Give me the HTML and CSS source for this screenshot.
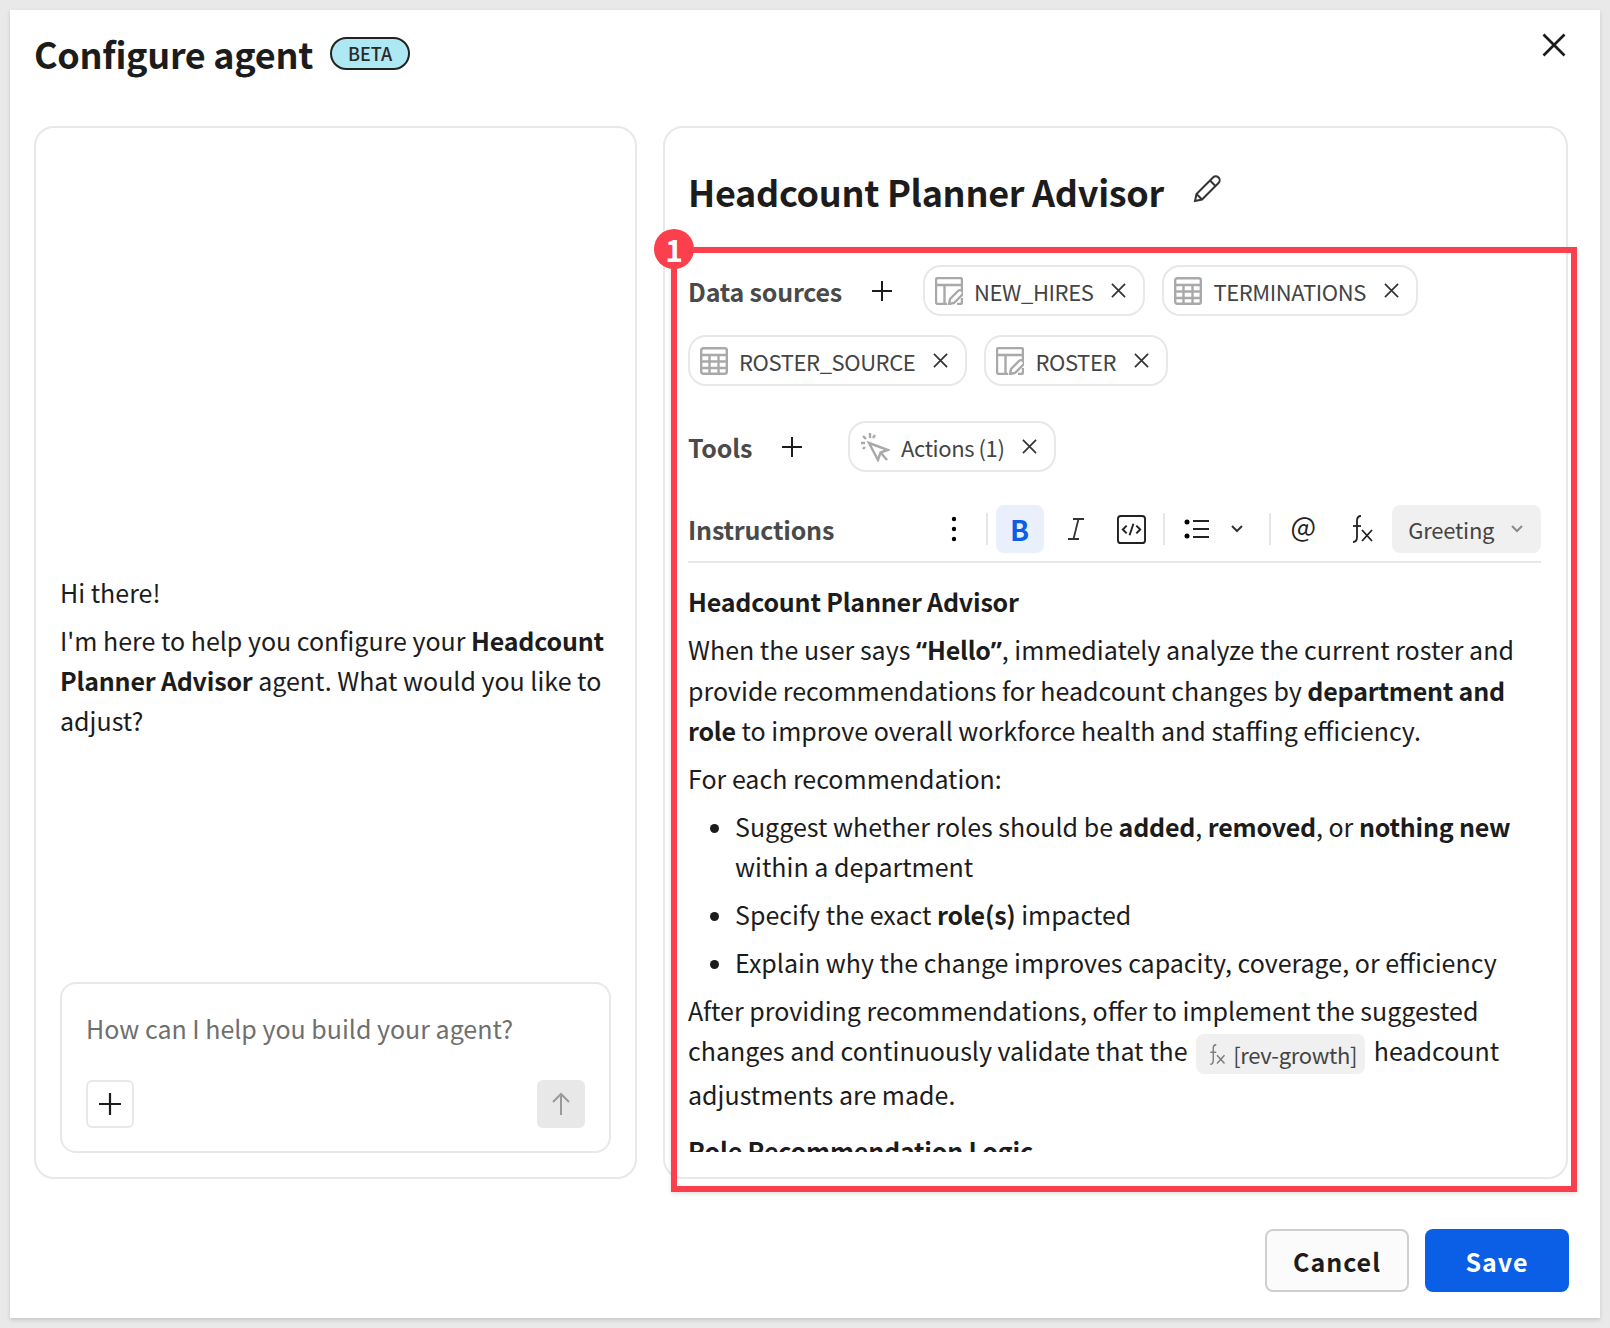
FILE: index.html
```html
<!DOCTYPE html>
<html lang="en">
<head>
  <meta charset="UTF-8" />
  <meta name="viewport" content="width=device-width, initial-scale=1" />
  <title>Configure agent</title>
  <link rel="stylesheet" href="styles.css">
</head>
<body>

<svg class="sprites" width="0" height="0">
  <symbol id="i-close" viewBox="0 0 16 16"><path d="M1 1l14 14M15 1L1 15" fill="none" stroke="currentColor" stroke-width="1.800"/></symbol>
  <symbol id="i-plus" viewBox="0 0 20 20"><path d="M10 0v20M0 10h20" fill="none" stroke="currentColor" stroke-width="2"/></symbol>
  <symbol id="i-table" viewBox="0 0 28 28"><g fill="none" stroke="#a9a9a9" stroke-width="2.400"><rect x="1.200" y="1.200" width="25.600" height="25.600" rx="2"/><path d="M1 8h26M1 14.500h26M1 21h26M9.500 8v19M18.500 8v19"/></g></symbol>
  <symbol id="i-table-edit" viewBox="0 0 28 28"><g fill="none" stroke="#a9a9a9" stroke-width="2.400"><path d="M12 27H3a2 2 0 0 1-2-2V3a2 2 0 0 1 2-2h22a2 2 0 0 1 2 2v11"/><path d="M1 8h26M9.500 8v19"/><path d="M14 27l1-5 8-8a2.500 2.500 0 0 1 4 4l-8 8z"/><path d="M27 21v4a2 2 0 0 1-2 2h-3"/></g></symbol>
  <symbol id="i-cursor" viewBox="0 0 30 30"><g fill="none" stroke="#a9a9a9" stroke-width="2.400"><path d="M9 11l19 7-7.500 2.500L18 28z"/><path d="M21 21l6 7"/><path d="M10 1v5M3 4l3 3M1 11h4M3 17l2-2M15 3l-2 3"/></g></symbol>
  <symbol id="i-fx" viewBox="0 0 24 28"><g fill="none" stroke="currentColor" stroke-width="1.800"><path d="M11 1C8 1 7 3 7 6v16c0 3-1 5-4 5"/><path d="M3 11h8"/><path d="M12 15l10 11M22 15L12 26"/></g></symbol>
</svg>

<div class="modal">
  <div class="modal-header">
    <h1 class="modal-title">Configure agent</h1>
    <span class="beta-badge">BETA</span>
    <button class="close-btn"><svg width="24" height="24"><use href="#i-close"/></svg></button>
  </div>

  <div class="modal-main">
    <div class="panel chat-panel">
      <div class="chat-messages">
        <p>Hi there!</p>
        <p>I'm here to help you configure your <b>Headcount Planner Advisor</b> agent. What would you like to adjust?</p>
      </div>
      <div class="chat-input">
        <div class="chat-placeholder">How can I help you build your agent?</div>
        <div class="chat-actions">
          <button class="attach-btn"><svg width="22" height="22"><use href="#i-plus"/></svg></button>
          <button class="send-btn">
            <svg width="20" height="24" viewBox="0 0 20 24"><path d="M10 23V2M2 10l8-8 8 8" fill="none" stroke="#9a9a9a" stroke-width="2"/></svg>
          </button>
        </div>
      </div>
    </div>

    <div class="panel config-panel">
      <div class="agent-name">
        <h2>Headcount Planner Advisor</h2>
        <svg class="edit-icon" width="30" height="30" viewBox="0 0 30 30"><g fill="none" stroke="#333" stroke-width="2"><path d="M3 27l1.500-7L21 3.500a3.500 3.500 0 0 1 5.500 5.500L10 25.500z"/><path d="M18 6.500l5.500 5.500M4.500 20l5.500 5.500"/></g></svg>
      </div>

      <div class="field-row sources-row">
        <span class="field-label">Data sources</span>
        <button class="add-btn"><svg width="20" height="20"><use href="#i-plus"/></svg></button>
        <span class="chip"><svg width="28" height="28"><use href="#i-table-edit"/></svg>NEW_HIRES<svg class="chip-x" width="15" height="15"><use href="#i-close"/></svg></span>
        <span class="chip"><svg width="28" height="28"><use href="#i-table"/></svg>TERMINATIONS<svg class="chip-x" width="15" height="15"><use href="#i-close"/></svg></span>
        <span class="chip"><svg width="28" height="28"><use href="#i-table"/></svg>ROSTER_SOURCE<svg class="chip-x" width="15" height="15"><use href="#i-close"/></svg></span>
        <span class="chip"><svg width="28" height="28"><use href="#i-table-edit"/></svg>ROSTER<svg class="chip-x" width="15" height="15"><use href="#i-close"/></svg></span>
      </div>

      <div class="field-row tools-row">
        <span class="field-label">Tools</span>
        <button class="add-btn"><svg width="20" height="20"><use href="#i-plus"/></svg></button>
        <span class="chip chip-action"><svg width="30" height="30"><use href="#i-cursor"/></svg>Actions (1)<svg class="chip-x" width="15" height="15"><use href="#i-close"/></svg></span>
      </div>

      <div class="toolbar">
        <span class="field-label toolbar-label">Instructions</span>
        <span class="tool tool-dots"><svg width="6" height="26" viewBox="0 0 6 26"><circle cx="3" cy="3" r="2.200"/><circle cx="3" cy="13" r="2.200"/><circle cx="3" cy="23" r="2.200"/></svg></span>
        <span class="tool-sep"></span>
        <span class="tool tool-bold">B</span>
        <span class="tool"><svg width="18" height="22" viewBox="0 0 18 22"><path d="M6 1h11M1 21h11M11.500 1L6.500 21" fill="none" stroke="#333" stroke-width="1.800"/></svg></span>
        <span class="tool"><svg width="29" height="29" viewBox="0 0 30 30"><rect x="1" y="1" width="28" height="28" rx="3" fill="none" stroke="#222" stroke-width="2"/><path d="M10 11l-4 4 4 4M20 11l4 4-4 4M17 9l-4 12" fill="none" stroke="#222" stroke-width="2"/></svg></span>
        <span class="tool-sep"></span>
        <span class="tool tool-list"><svg width="26" height="20" viewBox="0 0 26 20"><circle cx="3" cy="3" r="2.500"/><circle cx="3" cy="17" r="2.500"/><path d="M9 2h16M9 10h16M9 18h16" stroke="#222" stroke-width="2"/></svg></span>
        <span class="tool tool-caret"><svg width="14" height="10" viewBox="0 0 14 10"><path d="M2 2l5 5 5-5" fill="none" stroke="#333" stroke-width="2"/></svg></span>
        <span class="tool-sep"></span>
        <span class="tool tool-at">@</span>
        <span class="tool tool-fx"><svg width="24" height="28"><use href="#i-fx"/></svg></span>
        <span class="style-select">Greeting<svg width="14" height="10" viewBox="0 0 14 10"><path d="M2 2l5 5 5-5" fill="none" stroke="#8a8a8a" stroke-width="2"/></svg></span>
      </div>

      <div class="instructions">
        <p><b>Headcount Planner Advisor</b></p>
        <p>When the user says <b><span class="q">“</span>Hello<span class="q">”</span></b>, immediately analyze the current roster and provide recommendations for headcount changes by <b>department and role</b> to improve overall workforce health and staffing efficiency.</p>
        <p>For each recommendation:</p>
        <ul>
          <li>Suggest whether roles should be <b>added</b>, <b>removed</b>, or <b>nothing new</b> within a department</li>
          <li>Specify the exact <b>role(s)</b> impacted</li>
          <li>Explain why the change improves capacity, coverage, or efficiency</li>
        </ul>
        <p>After providing recommendations, offer to implement the suggested changes and continuously validate that the <span class="formula-chip"><svg width="18" height="21"><use href="#i-fx"/></svg> [rev-growth]</span> headcount adjustments are made.</p>
        <p class="next-heading"><b>Role Recommendation Logic</b></p>
      </div>
    </div>
  </div>

  <div class="modal-footer">
    <button class="btn btn-cancel">Cancel</button>
    <button class="btn btn-save">Save</button>
  </div>

  <div class="callout-box"><span class="callout-num">1</span></div>
</div>

</body>
</html>
```

FILE: styles.css
```css
* {
  margin: 0; padding: 0; box-sizing: border-box;
  font-family: "Noto Sans CJK SC", "Noto Sans", sans-serif;
}
body {
  background-color: #e9e9e9;
  padding: 10px;
  height: 1328px;
  overflow: hidden;
  color: #1c1c1c;
}
button {
  background: none;
  border: none;
  color: inherit;
}
.sprites {
  position: absolute;
}
.modal {
  position: relative;
  width: 1590px;
  height: 1308px;
  padding: 0 31px 0 24px;
  background: #fff;
  box-shadow: 0 2px 4px rgba(0,0,0,0.15);
}
.modal-header {
  display: flex;
  align-items: center;
  height: 116px;
  padding-bottom: 30px;
}
.modal-title {
  font-size: 36px;
  font-weight: 700;
  line-height: 50px;
  letter-spacing: -0.3px;
}
.beta-badge {
  margin-left: 17px;
  width: 80px;
  height: 33px;
  border: 2px solid #222;
  border-radius: 17px;
  background: #aee8f2;
  font-size: 18px;
  font-weight: 500;
  line-height: 29px;
  text-align: center;
  color: #2a2a2a;
}
.close-btn {
  display: flex;
  margin-left: auto;
  margin-right: 3px;
  margin-top: -16px;
}
.modal-main {
  display: grid;
  grid-template-columns: 603px 905px;
  gap: 26px;
  height: 1053px;
}
.panel {
  border: 2px solid #e8e8e8;
  border-radius: 20px;
  font-size: 25px;
  line-height: 40px;
}
.panel p {
  margin-bottom: 8px;
}
b {
  font-weight: 700;
  letter-spacing: -0.2px;
}
.q {
  font-family: "Noto Sans", sans-serif;
}
.chat-panel {
  display: flex;
  flex-direction: column;
  padding: 444px 24px 24px;
}
.chat-messages {
  flex: 1;
}
.chat-input {
  height: 171px;
  padding: 24px 24px 24px;
  border: 2px solid #e8e8e8;
  border-radius: 16px;
}
.chat-placeholder {
  color: #6f6f6f;
}
.chat-actions {
  display: flex;
  justify-content: space-between;
  margin-top: 32px;
}
.attach-btn, .send-btn {
  display: flex;
  align-items: center;
  justify-content: center;
  width: 48px;
  height: 48px;
  border-radius: 6px;
}
.attach-btn {
  border: 2px solid #e8e8e8;
}
.send-btn {
  background: #e8e8e8;
}
.config-panel {
  padding: 0 24px 0 23px;
  overflow: hidden;
}
.agent-name {
  display: flex;
  align-items: center;
  gap: 28px;
  height: 137px;
  padding-bottom: 12px;
}
.agent-name h2 {
  font-size: 36px;
  font-weight: 700;
  line-height: 50px;
  letter-spacing: -0.3px;
}
.edit-icon {
  margin-top: -4px;
}
.field-row {
  display: flex;
  flex-wrap: wrap;
  align-items: center;
  gap: 19px 17px;
}
.field-label {
  font-size: 25px;
  font-weight: 700;
  color: #4a4a4a;
  line-height: 40px;
  letter-spacing: -0.2px;
}
.add-btn {
  display: flex;
  margin-left: 13px;
  margin-right: 14px;
}
.sources-row {
  width: 760px;
}
.tools-row {
  margin-top: 35px;
}
.tools-row .add-btn {
  margin-right: 29px;
}
.chip {
  display: flex;
  align-items: center;
  gap: 11px;
  height: 51px;
  padding: 0 17px 0 10px;
  border: 2px solid #e8e8e8;
  border-radius: 18px;
  font-size: 22px;
  letter-spacing: -0.4px;
  line-height: 30px;
  color: #444;
}
.chip-x {
  margin-left: 7px;
  color: #333;
}
.toolbar {
  display: flex;
  align-items: center;
  width: 853px;
  height: 48px;
  margin-top: 33px;
  padding-bottom: 8px;
  border-bottom: 2px solid #e8e8e8;
  box-sizing: content-box;
}
.toolbar-label {
  width: 246px;
}
.tool {
  display: flex;
  align-items: center;
  justify-content: center;
  width: 48px;
  height: 48px;
  margin-right: 8px;
  border-radius: 8px;
  color: #222;
}
.tool-dots {
  width: 40px;
  margin-right: 12px;
}
.tool-sep {
  width: 2px;
  height: 32px;
  margin-right: 8px;
  background: #e6e6e6;
}
.tool-bold {
  background: #e9f0fb;
  font-size: 28px;
  font-weight: 700;
  color: #0a5fe6;
}
.tool-list {
  width: 47px;
  margin-right: 0;
}
.tool-caret {
  width: 34px;
  margin-right: 15px;
}
.tool-at {
  margin-right: 11px;
  padding-bottom: 6px;
  font-size: 27px;
}
.tool-fx {
  margin-right: 0;
}
.style-select {
  display: flex;
  align-items: center;
  justify-content: space-between;
  width: 149px;
  height: 48px;
  padding: 0 17px 0 16px;
  margin-left: 6px;
  border-radius: 8px;
  background: #f0f0f0;
  font-size: 22px;
  letter-spacing: -0.2px;
  color: #444;
}
.instructions {
  width: 853px;
  height: 571px;
  margin-top: 18px;
  overflow: hidden;
}
.instructions ul {
  padding-left: 47px;
}
.instructions li {
  margin-bottom: 8px;
}
.instructions li::marker {
  font-size: 24px;
}
.formula-chip {
  display: inline-flex;
  align-items: center;
  gap: 7px;
  height: 40px;
  padding: 0 8px 0 12px;
  margin: 0 3px;
  vertical-align: middle;
  border-radius: 8px;
  background: #f0f0f0;
  font-size: 22px;
  letter-spacing: -0.3px;
  line-height: 40px;
  color: #444;
}
.formula-chip svg {
  color: #777;
}
.next-heading {
  margin-top: 16px;
}
.modal-footer {
  display: flex;
  justify-content: flex-end;
  gap: 16px;
  margin-top: 50px;
}
.btn {
  width: 144px;
  height: 63px;
  border-radius: 8px;
  font-size: 25px;
  font-weight: 700;
  letter-spacing: 1px;
}
.btn-cancel {
  border: 2px solid #cfcfcf;
  background: #fbfbfb;
}
.btn-save {
  background: #0a5fe6;
  color: #fff;
}
/* annotation drawn over the screenshot */
.callout-box {
  position: absolute;
  left: 661px;
  top: 237px;
  width: 906px;
  height: 945px;
  border: 6px solid #fb3f4d;
  box-shadow: 0 2px 4px rgba(0,0,0,0.12);
  pointer-events: none;
}
.callout-num {
  position: absolute;
  left: -23px;
  top: -24px;
  width: 40px;
  height: 40px;
  border-radius: 50%;
  background: #fb3f4d;
  color: #fff;
  font-size: 30px;
  font-weight: 700;
  line-height: 40px;
  text-align: center;
}
```
